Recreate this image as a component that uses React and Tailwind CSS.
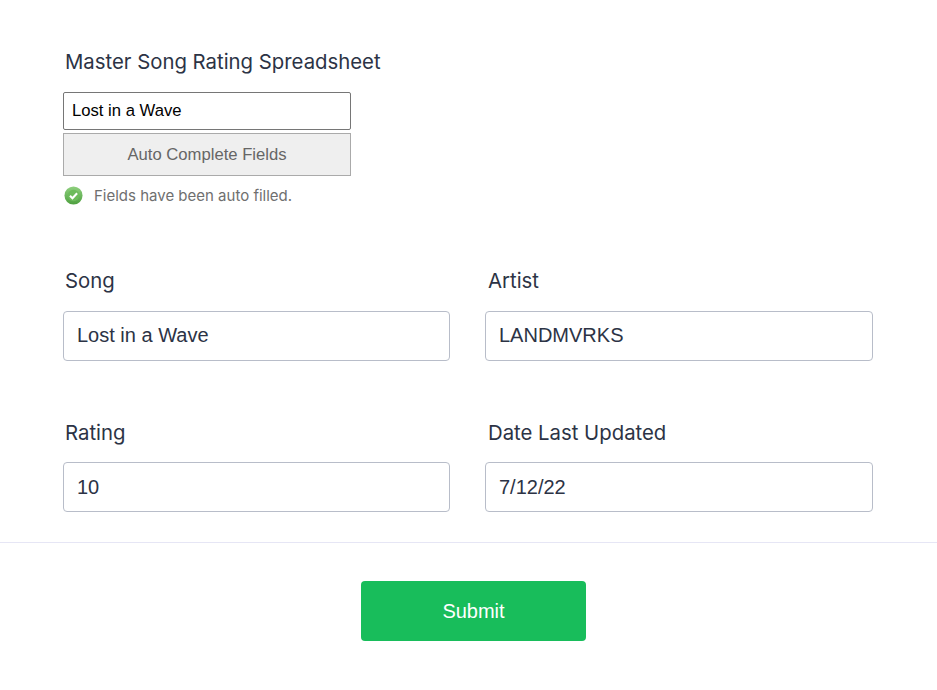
import React from 'react';

const Field = ({ label, value, labelPad = 'pl-[2px]', inputGap = 'mt-[18px]', inputPad = 'pb-[2px]' }) => (
    <div className="flex flex-col">
        <label className={`${labelPad} h-6 font-['Inter',sans-serif] text-[20.33px] leading-6 text-[#2c3345]`}>{label}</label>
        <input
            readOnly
            value={value}
            className={`${inputGap} ${inputPad} h-[50px] w-full rounded border border-[#b8bdc9] bg-white px-[13px] font-['Liberation_Sans',sans-serif] text-[20px] text-[#2c3345] outline-none`}
        />
    </div>
);

const App = () => {
    return (
        <div className="min-h-[690px] bg-white font-['Liberation_Sans',sans-serif]">
            <div className="pl-[63px] pr-[64px] pt-[50px]">
                <div className="h-6 pl-[2px] font-['Inter',sans-serif] text-[20.33px] leading-6 text-[#2c3345]">
                    Master Song Rating Spreadsheet
                </div>
                <div className="mt-[18px] w-[288px]">
                    <input
                        readOnly
                        value="Lost in a Wave"
                        className="block h-[38px] w-full rounded-[2px] border border-[#767676] bg-white px-2 text-[16.67px] text-black outline-none"
                    />
                    <button className="mt-[3px] block h-[43px] w-full border border-[#aaaaaa] bg-[#efefef] text-[16.67px] text-[#666666]">
                        Auto Complete Fields
                    </button>
                </div>
                <div className="mt-[9px] flex h-5 items-center gap-[11px] pl-px">
                    <svg className="h-[19px] w-[19px]" viewBox="0 0 20 20">
                        <defs>
                            <linearGradient id="ok" x1="0" y1="0" x2="0" y2="1">
                                <stop offset="0" stopColor="#8fd07f" />
                                <stop offset="1" stopColor="#4ea03f" />
                            </linearGradient>
                        </defs>
                        <circle cx="10" cy="10" r="9.5" fill="url(#ok)" />
                        <circle cx="10" cy="10" r="6" fill="#6dbb5c" />
                        <path d="M6.3 10.2l2.6 2.6 4.9-5.2" fill="none" stroke="#ffffff" strokeWidth="2.2" />
                    </svg>
                    <span className="pt-[3px] font-['Inter',sans-serif] text-[15px] text-[#6f6f6f]">Fields have been auto filled.</span>
                </div>

                <div className="mt-[64px] grid grid-cols-[387px_388px] gap-x-[35px] gap-y-[60px]">
                    <Field label="Song" value="Lost in a Wave" />
                    <Field label="Artist" value="LANDMVRKS" labelPad="pl-[3px]" />
                    <Field label="Rating" value="10" inputGap="mt-[17px]" inputPad="pb-0" />
                    <Field label="Date Last Updated" value="7/12/22" labelPad="pl-[3px]" inputGap="mt-[17px]" inputPad="pb-0" />
                </div>
            </div>

            <div className="mt-[30px] border-t border-[#e6e6f5] pt-[38px]">
                <div className="flex justify-center pl-[10px]">
                    <button className="h-[60px] w-[225px] rounded bg-[#18bd5b] text-[20px] text-white">
                        Submit
                    </button>
                </div>
            </div>
        </div>
    );
};

export default App;
